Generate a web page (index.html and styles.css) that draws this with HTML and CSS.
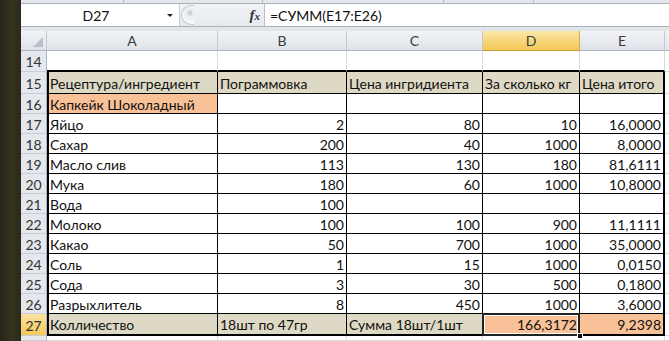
FILE: index.html
```html
<!DOCTYPE html>
<html lang="ru">
<head>
<meta charset="utf-8">
<title>Excel</title>
<link rel="stylesheet" href="styles.css">
</head>
<body>
<div class="desk"></div>
<div class="excel">
  <div class="ribbon-edge">
    <span class="rsep s1"></span><span class="rsep s2"></span><span class="rsep s3"></span><span class="rsep s4"></span>
  </div>
  <div class="formula-bar">
    <div class="namebox"><span class="name">D27</span><span class="dd"></span></div>
    <div class="pillzone"><span class="pill"></span><span class="fx">f<span class="x">x</span></span></div>
    <div class="formula">=СУММ(E17:E26)</div>
  </div>
  <div class="bar-gap"></div>
  <div class="sheet">
    <div class="hd corner"><svg width="10" height="10" viewBox="0 0 10 10"><polygon points="10,0 10,10 0,10" fill="#b9bfc7"/></svg></div>
    <div class="hd">A</div><div class="hd">B</div><div class="hd">C</div><div class="hd sel">D</div><div class="hd">E</div><div class="hd last"></div>

    <div class="rn">14</div><div class="c top"></div><div class="c top"></div><div class="c top"></div><div class="c top"></div><div class="c top"></div><div class="c g"></div>

    <div class="rn">15</div><div class="c t a beige">Рецептура/ингредиент</div><div class="c t beige">Пограммовка</div><div class="c t beige">Цена ингридиента</div><div class="c t beige">За сколько кг</div><div class="c t e beige">Цена итого</div><div class="c g"></div>

    <div class="rn">16</div><div class="c t a orange">Капкейк Шоколадный</div><div class="c t"></div><div class="c t"></div><div class="c t"></div><div class="c t e"></div><div class="c g"></div>

    <div class="rn">17</div><div class="c t a">Яйцо</div><div class="c t n">2</div><div class="c t n">80</div><div class="c t n">10</div><div class="c t e n">16,0000</div><div class="c g"></div>
    <div class="rn">18</div><div class="c t a">Сахар</div><div class="c t n">200</div><div class="c t n">40</div><div class="c t n">1000</div><div class="c t e n">8,0000</div><div class="c g"></div>
    <div class="rn">19</div><div class="c t a">Масло слив</div><div class="c t n">113</div><div class="c t n">130</div><div class="c t n">180</div><div class="c t e n">81,6111</div><div class="c g"></div>
    <div class="rn">20</div><div class="c t a">Мука</div><div class="c t n">180</div><div class="c t n">60</div><div class="c t n">1000</div><div class="c t e n">10,8000</div><div class="c g"></div>
    <div class="rn">21</div><div class="c t a">Вода</div><div class="c t n">100</div><div class="c t n"></div><div class="c t n"></div><div class="c t e n"></div><div class="c g"></div>
    <div class="rn">22</div><div class="c t a">Молоко</div><div class="c t n">100</div><div class="c t n">100</div><div class="c t n">900</div><div class="c t e n">11,1111</div><div class="c g"></div>
    <div class="rn">23</div><div class="c t a">Какао</div><div class="c t n">50</div><div class="c t n">700</div><div class="c t n">1000</div><div class="c t e n">35,0000</div><div class="c g"></div>
    <div class="rn">24</div><div class="c t a">Соль</div><div class="c t n">1</div><div class="c t n">15</div><div class="c t n">1000</div><div class="c t e n">0,0150</div><div class="c g"></div>
    <div class="rn">25</div><div class="c t a">Сода</div><div class="c t n">3</div><div class="c t n">30</div><div class="c t n">500</div><div class="c t e n">0,1800</div><div class="c g"></div>
    <div class="rn">26</div><div class="c t a">Разрыхлитель</div><div class="c t n">8</div><div class="c t n">450</div><div class="c t n">1000</div><div class="c t e n">3,6000</div><div class="c g"></div>

    <div class="rn sel">27</div><div class="c t a b beige">Колличество</div><div class="c t b beige">18шт по 47гр</div><div class="c t b beige">Сумма 18шт/1шт</div><div class="c t b n orange active">166,3172<span class="handle"></span></div><div class="c t b e n orange">9,2398</div><div class="c g"></div>

    <div class="rn"></div><div class="c g"></div><div class="c g"></div><div class="c g"></div><div class="c g"></div><div class="c g"></div><div class="c g"></div>
  </div>
</div>
</body>
</html>
```

FILE: styles.css
```css
* { box-sizing: border-box; }
html, body { margin: 0; padding: 0; }
body {
  width: 669px;
  height: 341px;
  overflow: hidden;
  display: flex;
  font-family: Lato, "Open Sans", sans-serif;
  font-size: 14px;
  color: #111;
  background: #fff;
}
.desk {
  width: 21px;
  flex: none;
  background: linear-gradient(90deg, #26251b, #34321f 60%, #2a291c);
}
.excel {
  flex: 1;
  display: flex;
  flex-direction: column;
  min-width: 0;
}
.ribbon-edge {
  height: 4px;
  background: #e3e7ec;
  border-bottom: 1px solid #a9b1bb;
  position: relative;
}
.rsep { position: absolute; top: 0; width: 1px; height: 3px; background: #b4bbc4; }
.s1 { left: 102px; } .s2 { left: 241px; } .s3 { left: 422px; } .s4 { left: 512px; }
.formula-bar {
  height: 23px;
  display: flex;
  background: #fff;
  border-bottom: 1px solid #a9b1bb;
}
.namebox {
  width: 159px;
  display: flex;
  align-items: center;
  position: relative;
  border-right: 1px solid #c7ccd3;
}
.name { flex: 1; text-align: center; font-size: 14px; padding-left: 4px; }
.dd {
  width: 0; height: 0;
  border-left: 3px solid transparent;
  border-right: 3px solid transparent;
  border-top: 3px solid #222;
  margin-right: 6px;
}
.pillzone {
  width: 85px;
  display: flex;
  align-items: center;
  justify-content: space-between;
  background: linear-gradient(#f1f3f6, #e6e9ee);
  border-right: 1px solid #b9c0c9;
  padding: 0 4px 0 1px;
}
.pill {
  width: 13px; height: 20px;
  border-radius: 10px 0 0 10px;
  background: radial-gradient(circle at 8px 7px, #cfd3d8 0 2px, #e7eaee 3px, #f5f6f8 8px);
  border: 1px solid #c3c8cf;
  border-right: none;
}
.fx {
  font-family: "Liberation Serif", serif;
  font-style: italic;
  font-size: 15px;
  color: #333;
  font-weight: bold;
}
.fx .x { font-size: 11px; }
.formula {
  flex: 1;
  display: flex;
  align-items: center;
  padding-left: 5px;
  font-size: 14px;
}
.bar-gap {
  height: 4px;
  background: #e2e6eb;
}
.sheet {
  display: grid;
  grid-template-columns: 26px 171px 129px 136px 97px 85px 1fr;
  grid-template-rows: 20px 21px 22px repeat(11, 20px) 22px 1fr;
  flex: 1;
  min-height: 0;
}
.hd {
  background: linear-gradient(#f2f4f7, #dfe3e8);
  border-right: 1px solid #c3c9d1;
  border-bottom: 1px solid #aab3be;
  display: flex;
  align-items: center;
  justify-content: center;
  color: #3b3b3b;
  font-size: 14px;
}
.hd.corner { justify-content: flex-end; align-items: flex-end; padding: 0 3px 3px 0; }
.hd.sel {
  background: linear-gradient(#fbe7a7, #f3c855);
  border-right-color: #d4ad48;
  border-bottom-color: #c69a32;
}
.hd.last { border-right: none; }
.rn {
  background: #e4e8ed;
  border-right: 1px solid #aab3be;
  border-bottom: 1px solid #c7cdd5;
  display: flex;
  align-items: center;
  justify-content: center;
  color: #333;
  font-size: 14px;
  padding-top: 1px;
}
.rn.sel { background: linear-gradient(#fbe3a0, #f3c95a); }
.c {
  border-right: 1px solid #d9dcdf;
  border-bottom: 1px solid #d9dcdf;
  display: flex;
  align-items: center;
  padding: 1px 2px 0 2px;
  white-space: nowrap;
  overflow: hidden;
  position: relative;
}
.c.a { padding-left: 1px; }
.c.top { border-bottom: 2px solid #000; }
.c.t { border-right-color: #000; border-bottom-color: #000; }
.c.a { border-left: 2px solid #000; }
.c.e { border-right: 2px solid #000; }
.c.b { border-bottom: 2px solid #000; }
.c.n { justify-content: flex-end; }
.beige { background: #ddd9c4; }
.orange { background: #f9c197; }
.active { overflow: visible; }
.active::after {
  content: "";
  position: absolute;
  inset: -1px -1px -2px -1px;
  border: 2px solid #222;
  box-shadow: inset 0 0 0 1px #fff;
  pointer-events: none;
}
.handle {
  position: absolute;
  right: -4px;
  bottom: -5px;
  width: 6px;
  height: 6px;
  background: #111;
  border: 1px solid #fff;
  z-index: 2;
}
```
